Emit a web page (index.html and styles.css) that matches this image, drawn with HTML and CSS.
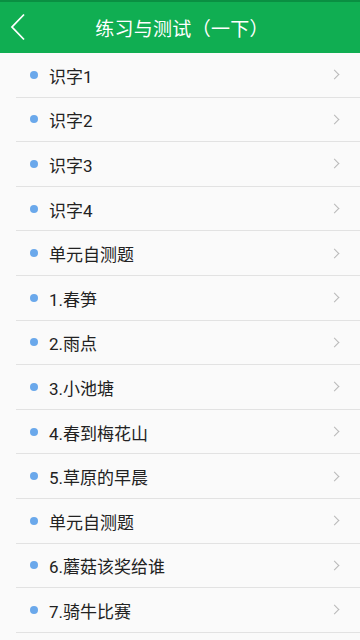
FILE: index.html
```html
<!DOCTYPE html>
<html lang="zh-CN">

<head>
    <meta charset="utf-8">
    <meta name="viewport" content="width=device-width, initial-scale=1">
    <title>练习与测试（一下）</title>
    <link rel="stylesheet" href="styles.css">
</head>

<body>
    <div class="header">
        <a class="back" href="#">
            <svg width="16" height="28" viewBox="0 0 16 28">
                <polyline points="14,1.5 2,14 14,26.5" fill="none" stroke="#fff" stroke-width="1.8" />
            </svg>
        </a>
        <h1>练习与测试（一下）</h1>
    </div>
    <ul class="list">
        <li><i class="dot"></i><span>识字1</span><b class="arrow"></b></li>
        <li><i class="dot"></i><span>识字2</span><b class="arrow"></b></li>
        <li><i class="dot"></i><span>识字3</span><b class="arrow"></b></li>
        <li><i class="dot"></i><span>识字4</span><b class="arrow"></b></li>
        <li><i class="dot"></i><span>单元自测题</span><b class="arrow"></b></li>
        <li><i class="dot"></i><span>1.春笋</span><b class="arrow"></b></li>
        <li><i class="dot"></i><span>2.雨点</span><b class="arrow"></b></li>
        <li><i class="dot"></i><span>3.小池塘</span><b class="arrow"></b></li>
        <li><i class="dot"></i><span>4.春到梅花山</span><b class="arrow"></b></li>
        <li><i class="dot"></i><span>5.草原的早晨</span><b class="arrow"></b></li>
        <li><i class="dot"></i><span>单元自测题</span><b class="arrow"></b></li>
        <li><i class="dot"></i><span>6.蘑菇该奖给谁</span><b class="arrow"></b></li>
        <li><i class="dot"></i><span>7.骑牛比赛</span><b class="arrow"></b></li>
    </ul>
</body>

</html>
```

FILE: styles.css
```css
* {
    padding: 0;
    margin: 0;
    box-sizing: border-box;
}

html,
body {
    font-family: Roboto, "Noto Sans CJK SC", sans-serif;
    color: #222;
    background: #fafafa;
    overflow: hidden;
}

ul,
li {
    list-style: none;
}

.header {
    position: relative;
    height: 53px;
    background: #10ae52;
    border-top: 2px solid #0a8f42;
    display: flex;
    align-items: center;
    justify-content: center;
}

.header h1 {
    font-size: 19px;
    font-weight: normal;
    color: #fff;
    letter-spacing: 0.3px;
    margin-left: 4px;
}

.back {
    position: absolute;
    left: 10px;
    top: 11px;
    display: block;
    width: 16px;
    height: 28px;
}

.list li {
    height: 44.6px;
    margin-left: 16px;
    border-bottom: 1px solid #e2e2e2;
    display: flex;
    align-items: center;
    padding-right: 22px;
}

.dot {
    width: 8px;
    height: 8px;
    border-radius: 50%;
    background: #6aa8eb;
    margin: 0 11px 0 14px;
}

.list span {
    flex: 1;
    font-size: 17px;
    padding-top: 1px;
}

.arrow {
    width: 7px;
    height: 7px;
    border-top: 1.2px solid #b8b8b8;
    border-right: 1.2px solid #b8b8b8;
    transform: rotate(45deg);
}
```
